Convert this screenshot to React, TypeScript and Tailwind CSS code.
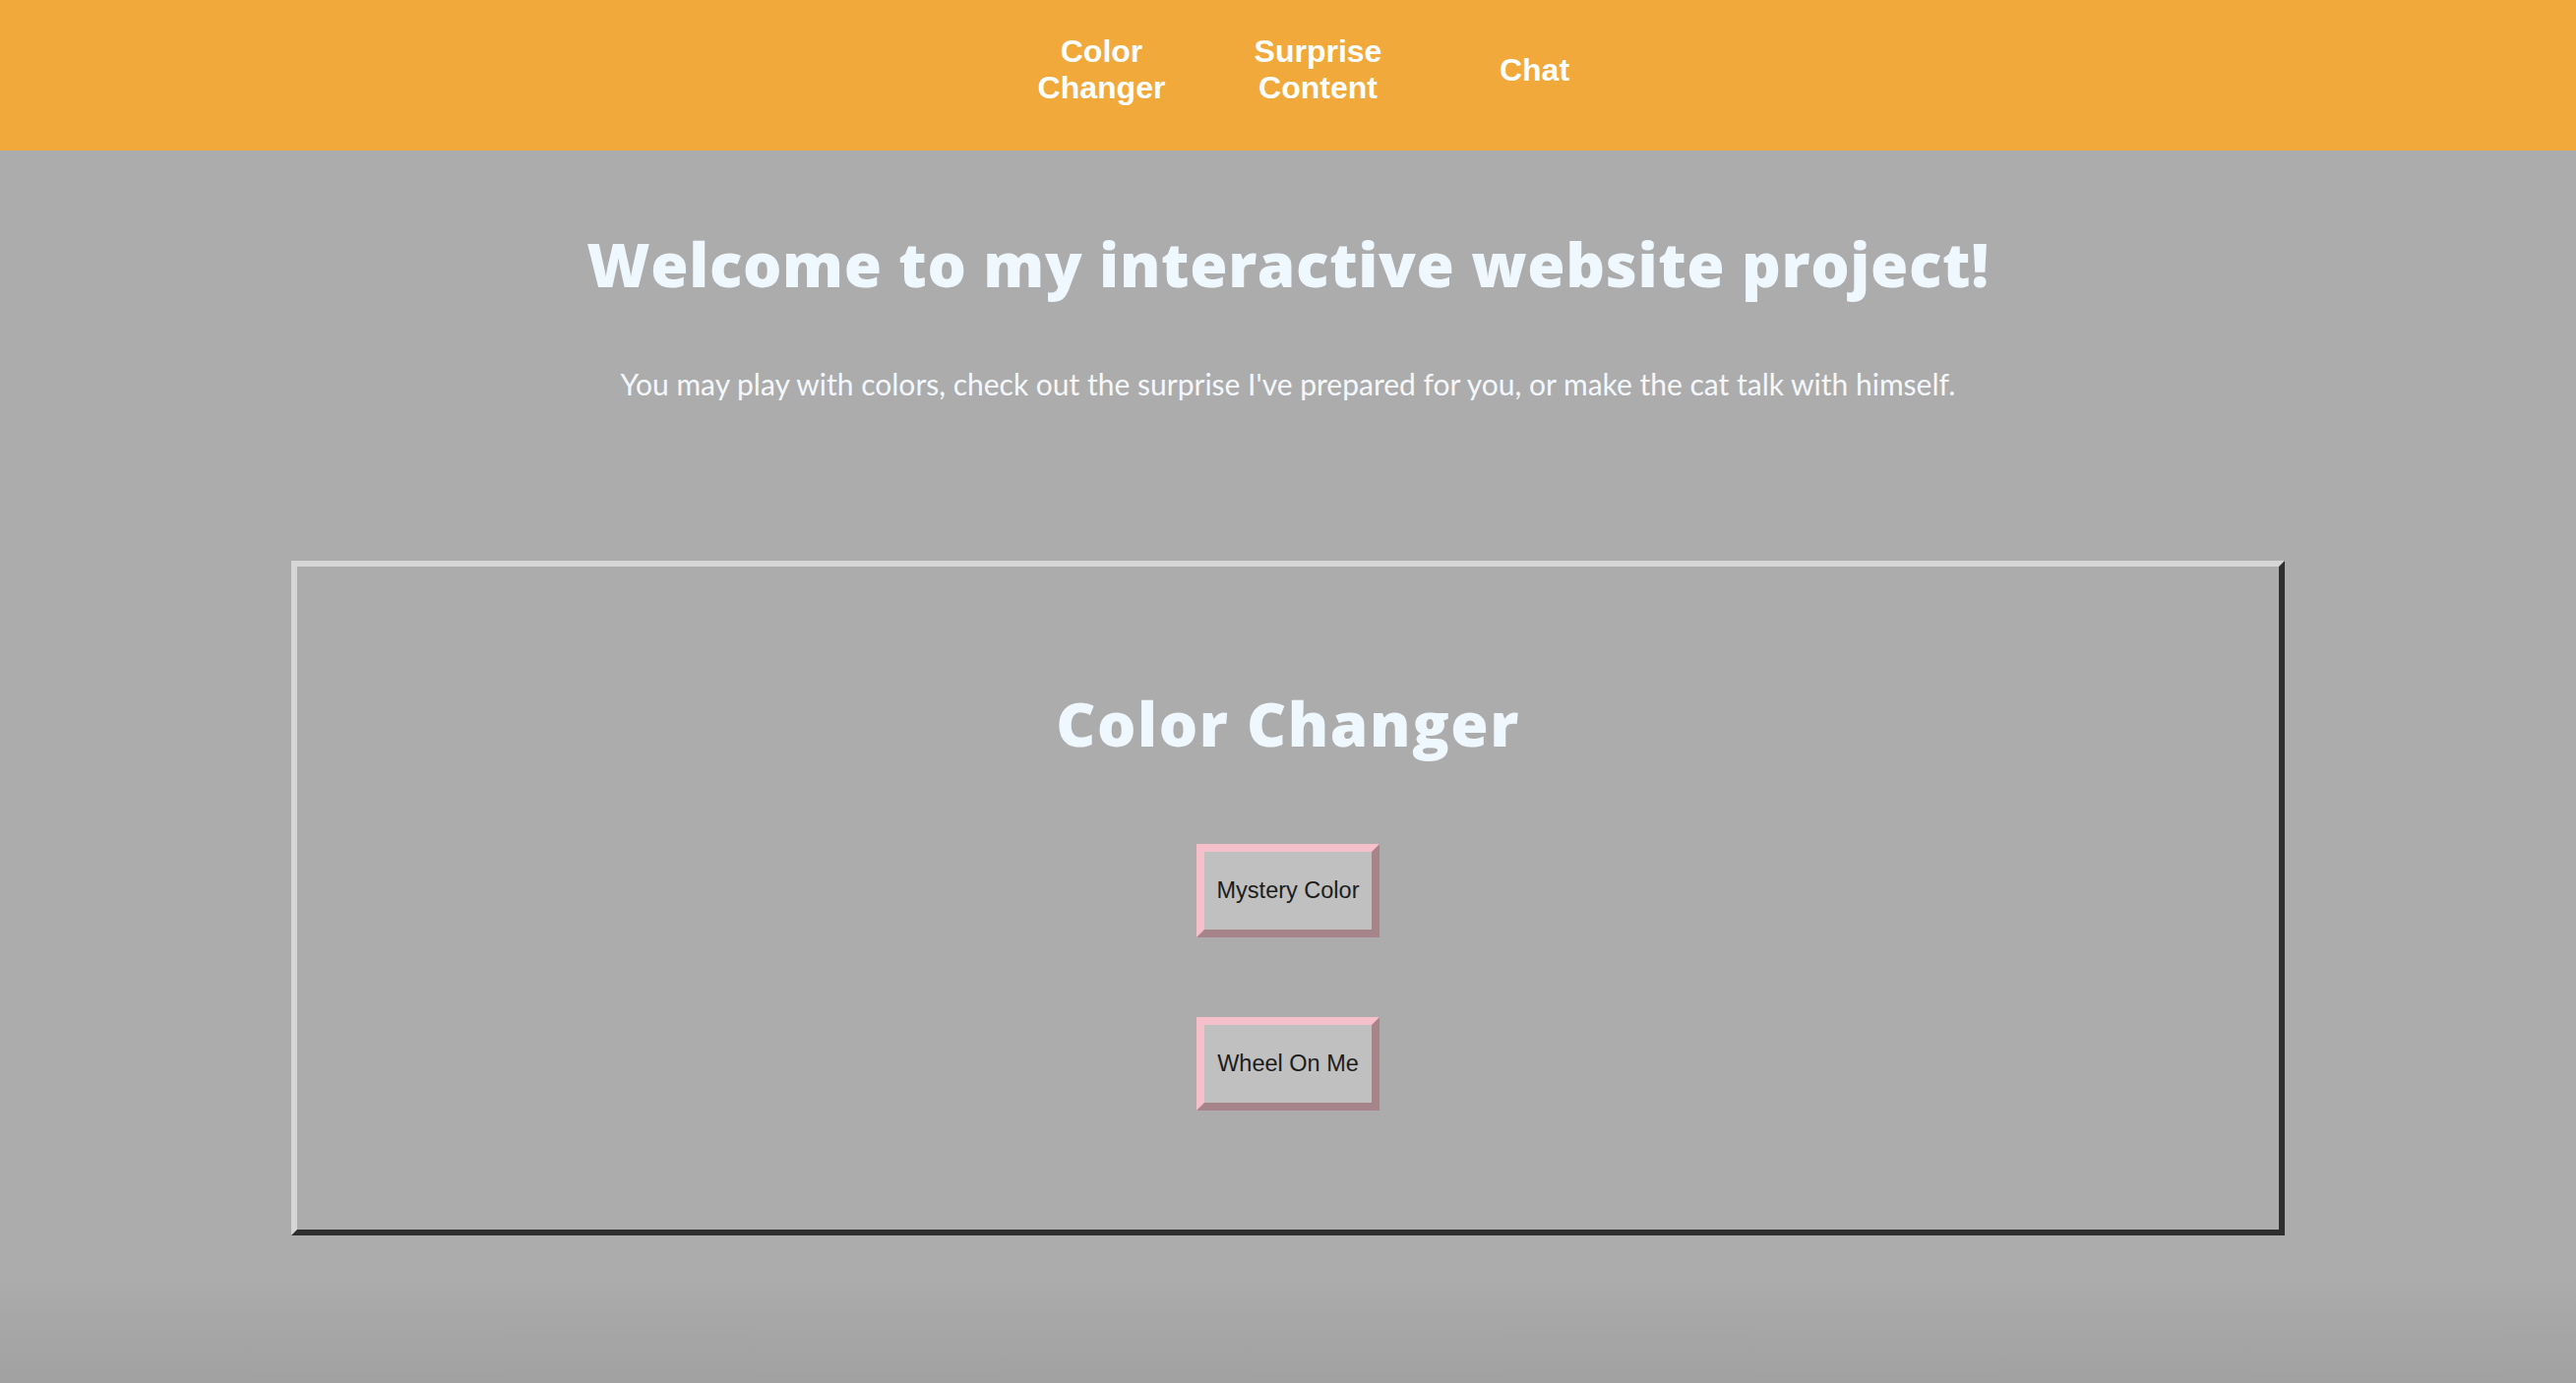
import React from 'react';

const navItems: string[][] = [['Color', 'Changer'], ['Surprise', 'Content'], ['Chat']];

const MysteryButton: React.FC<{ label: string }> = ({ label }) => (
    <button
        type="button"
        className="w-[186px] h-[95px] bg-[#c0c0c0] border-[8px] border-t-[#f5c0ca] border-l-[#f5c0ca] border-b-[#a7838a] border-r-[#a7838a] text-[#1c1c1c] text-[23.5px] font-['Liberation_Sans',Arial,sans-serif]"
    >
        {label}
    </button>
);

export default function App() {
    return (
        <div className="min-h-screen bg-[linear-gradient(to_bottom,#acacac_92%,#a1a1a1_100%)] font-['Lato','Open_Sans',sans-serif]">
            {/* top nav */}
            <nav className="h-[153px] bg-[#f1a93b] flex justify-center items-center pb-[11px] pl-[61px]">
                <ul className="flex items-center">
                    {navItems.map((lines) => (
                        <li
                            key={lines[0]}
                            className="w-[220px] text-center text-white font-bold text-[32px] leading-[37px] font-['Liberation_Sans',Arial,sans-serif]"
                        >
                            {lines.map((l, i) => (
                                <React.Fragment key={l}>
                                    {i > 0 && <br />}
                                    {l}
                                </React.Fragment>
                            ))}
                        </li>
                    ))}
                </ul>
            </nav>

            <main className="flex flex-col items-center">
                <h1 className="mt-[84px] text-[62px] leading-none font-extrabold tracking-[0.01em] text-[#f0f8ff] font-['Open_Sans','Lato',sans-serif]">
                    Welcome to my interactive website project!
                </h1>
                <p className="mt-[76px] text-[30px] leading-none text-[#f4f8fc]">
                    You may play with colors, check out the surprise I've prepared for you, or make the cat talk with himself.
                </p>

                {/* color changer box */}
                <section className="mt-[165px] w-[2026px] flex flex-col items-center border-[6px] border-t-[#d6d6d6] border-l-[#d6d6d6] border-b-[#2f2f2f] border-r-[#2f2f2f] pt-[128px] pb-[121px]">
                    <h2 className="text-[62px] leading-none font-extrabold tracking-[0.025em] text-[#f0f8ff] font-['Open_Sans','Lato',sans-serif]">
                        Color Changer
                    </h2>
                    <div className="mt-[92px] flex flex-col items-center gap-[81px]">
                        <MysteryButton label="Mystery Color" />
                        <MysteryButton label="Wheel On Me" />
                    </div>
                </section>
            </main>
        </div>
    );
}
